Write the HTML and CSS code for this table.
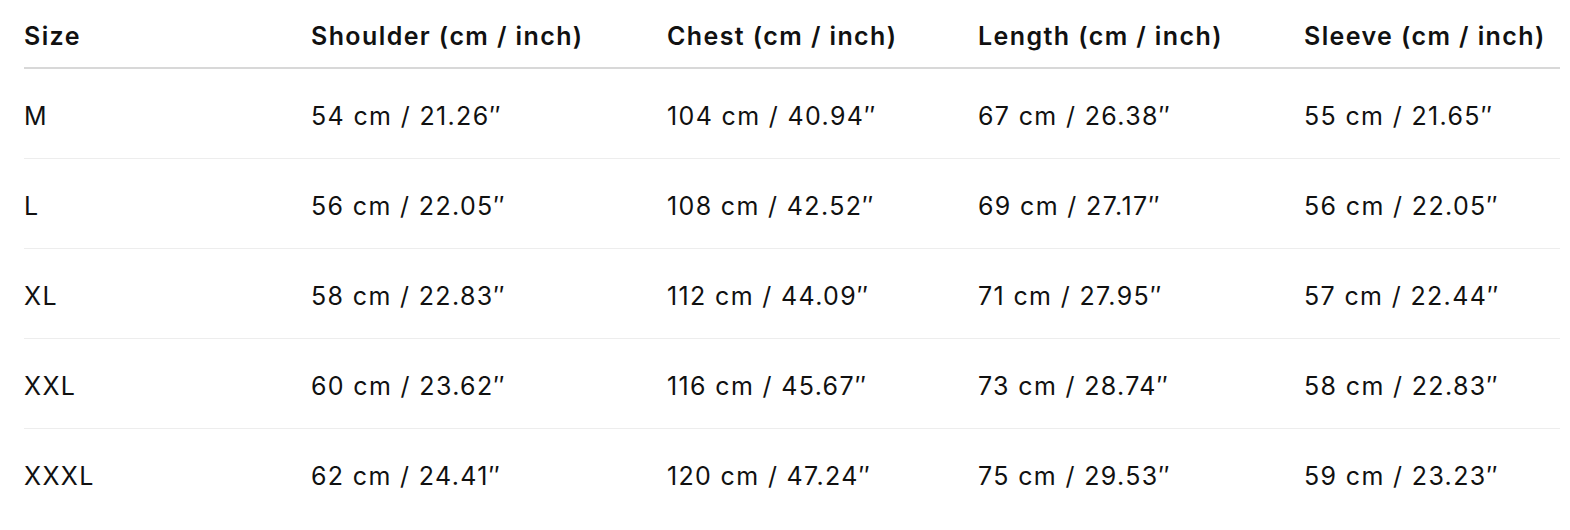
FILE: index.html
```html
<!DOCTYPE html>
<html>
<head>
<meta charset="utf-8">
<link rel="stylesheet" href="styles.css">
</head>
<body>
<table class="size-table">
  <colgroup>
    <col class="c1"><col class="c2"><col class="c3"><col class="c4"><col class="c5">
  </colgroup>
  <thead>
    <tr><th>Size</th><th>Shoulder (cm / inch)</th><th>Chest (cm / inch)</th><th>Length (cm / inch)</th><th>Sleeve (cm / inch)</th></tr>
  </thead>
  <tbody>
    <tr><td>M</td><td>54 cm / 21.26″</td><td>104 cm / 40.94″</td><td>67 cm / 26.38″</td><td>55 cm / 21.65″</td></tr>
    <tr><td>L</td><td>56 cm / 22.05″</td><td>108 cm / 42.52″</td><td>69 cm / 27.17″</td><td>56 cm / 22.05″</td></tr>
    <tr><td>XL</td><td>58 cm / 22.83″</td><td>112 cm / 44.09″</td><td>71 cm / 27.95″</td><td>57 cm / 22.44″</td></tr>
    <tr><td>XXL</td><td>60 cm / 23.62″</td><td>116 cm / 45.67″</td><td>73 cm / 28.74″</td><td>58 cm / 22.83″</td></tr>
    <tr class="last"><td>XXXL</td><td>62 cm / 24.41″</td><td>120 cm / 47.24″</td><td>75 cm / 29.53″</td><td>59 cm / 23.23″</td></tr>
  </tbody>
</table>
</body>
</html>
```
FILE: styles.css
```css
html, body {
  margin: 0;
  padding: 0;
  background: #ffffff;
}
body {
  padding: 0 0 0 24px;
  font-family: Inter, "Liberation Sans", sans-serif;
  color: #111111;
}
.size-table {
  width: 1536px;
  border-collapse: collapse;
  table-layout: fixed;
  font-size: 25px;
}
.c1 { width: 287px; }
.c2 { width: 356px; }
.c3 { width: 311px; }
.c4 { width: 326px; }
.c5 { width: 256px; }
.size-table th,
.size-table td {
  padding: 0;
  text-align: left;
  vertical-align: middle;
  white-space: nowrap;
}
.size-table th {
  height: 68px;
  font-weight: 600;
  letter-spacing: 1.4px;
  border-bottom: 2px solid #d8d8d8;
  padding-top: 4px;
  box-sizing: border-box;
}
.size-table td {
  height: 85px;
  padding-top: 4px;
  font-weight: 400;
  letter-spacing: 1.35px;
  border-bottom: 1px solid #ededed;
}
.size-table tr.last td {
  border-bottom: none;
}
```
